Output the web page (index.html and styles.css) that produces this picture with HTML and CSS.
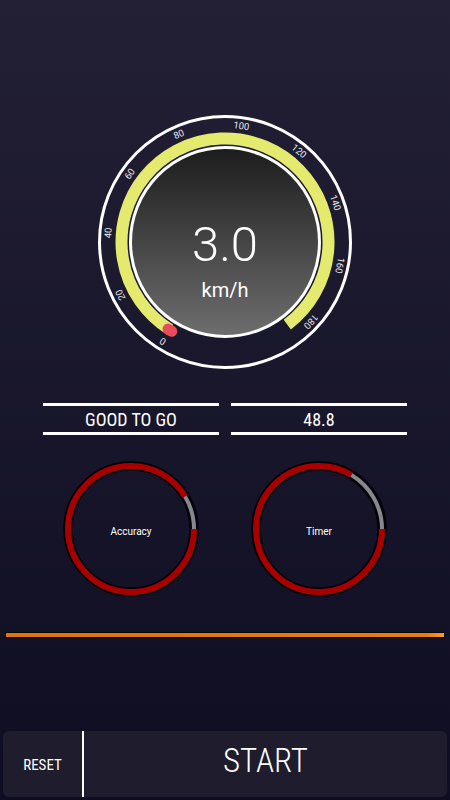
FILE: index.html
```html
<!DOCTYPE html>
<html lang="en">
<head>
    <meta charset="UTF-8">
    <title>Speedometer</title>
    <link rel="stylesheet" href="styles.css">
</head>
<body>
    <div class="screen">
        <!-- speed gauge -->
        <div class="gauge">
            <svg class="dial" width="260" height="260" viewBox="0 0 260 260">
                <defs>
                    <linearGradient id="faceFill" x1="0" y1="0" x2="0" y2="1">
                        <stop offset="0" stop-color="#1c1c1c"/>
                        <stop offset="1" stop-color="#6e6e6e"/>
                    </linearGradient>
                </defs>
                <circle cx="130" cy="130" r="125.5" fill="none" stroke="#fff" stroke-width="3"/>
                <g class="scale">
                    <text x="130" y="12.5" transform="rotate(212 130 130)">0</text>
                    <text x="130" y="12.5" transform="rotate(243.2 130 130)">20</text>
                    <text x="130" y="12.5" transform="rotate(274.4 130 130)">40</text>
                    <text x="130" y="12.5" transform="rotate(305.6 130 130)">60</text>
                    <text x="130" y="12.5" transform="rotate(336.8 130 130)">80</text>
                    <text x="130" y="12.5" transform="rotate(368 130 130)">100</text>
                    <text x="130" y="12.5" transform="rotate(399.2 130 130)">120</text>
                    <text x="130" y="12.5" transform="rotate(430.4 130 130)">140</text>
                    <text x="130" y="12.5" transform="rotate(461.6 130 130)">160</text>
                    <text x="130" y="12.5" transform="rotate(492.8 130 130)">180</text>
                </g>
                <path d="M 75.15 217.77 A 103.5 103.5 0 1 1 192.29 212.66" fill="none" stroke="#e4ea6e" stroke-width="12"/>
                <circle cx="130" cy="130" r="94.5" fill="url(#faceFill)" stroke="#fff" stroke-width="3"/>
                <!-- needle -->
                <path d="M 76.75 219.34 A 104 104 0 0 1 73.05 217.03" fill="none" stroke="#e94b5b" stroke-width="11" stroke-linecap="round"/>
            </svg>
            <div class="readout">
                <span class="speed">3.0</span>
                <span class="unit">km/h</span>
            </div>
        </div>

        <div class="status">
            <div class="status_box">GOOD TO GO</div>
            <div class="status_box">48.8</div>
        </div>

        <div class="meters">
            <div class="meter">
                <svg width="136" height="136" viewBox="0 0 136 136">
                    <circle class="meter_edge" cx="68" cy="68" r="63"/>
                    <circle class="meter_fill" cx="68" cy="68" r="63" pathLength="360" stroke-dasharray="329 31"/>
                    <circle class="meter_rest" cx="68" cy="68" r="63" pathLength="360" stroke-dasharray="31 329" stroke-dashoffset="31"/>
                </svg>
                <span class="meter_label">Accuracy</span>
            </div>
            <div class="meter">
                <svg width="136" height="136" viewBox="0 0 136 136">
                    <circle class="meter_edge" cx="68" cy="68" r="63"/>
                    <circle class="meter_fill" cx="68" cy="68" r="63" pathLength="360" stroke-dasharray="301 59"/>
                    <circle class="meter_rest" cx="68" cy="68" r="63" pathLength="360" stroke-dasharray="59 301" stroke-dashoffset="59"/>
                </svg>
                <span class="meter_label">Timer</span>
            </div>
        </div>

        <div class="progress"></div>

        <div class="controls">
            <a class="reset_btn">RESET</a>
            <a class="start_btn">START</a>
        </div>
    </div>
</body>
</html>
```

FILE: styles.css
```css
html{
    font-family: Roboto, "Liberation Sans", sans-serif;
}
body{margin: 0;padding: 0;}
.screen{
    display: flex;
    flex-direction: column;
    min-height: 100vh;
    background: linear-gradient(#232036, #0f0d22);
    color: #fff;
}

/* gauge */
.gauge{
    display: grid;
    justify-content: center;
    margin-top: 112px;
}
.gauge .dial,
.gauge .readout{
    grid-area: 1 / 1;
}
.gauge .dial{display: block;}
.gauge .scale text{
    fill: #e6e6e6;
    font-size: 9.5px;
    text-anchor: middle;
    dominant-baseline: central;
}
.gauge .readout{
    display: flex;
    flex-direction: column;
    align-items: center;
    padding-top: 108px;
}
.gauge .speed{
    font-size: 49px;
    font-weight: 300;
    line-height: 50px;
    font-stretch: 92%;
}
.gauge .unit{
    margin-top: 10px;
    font-size: 20px;
    line-height: 20px;
}

/* status */
.status,
.meters{
    display: grid;
    grid-template-columns: 176px 176px;
    column-gap: 12px;
    justify-content: center;
}
.status{
    margin-top: 31px;
}
.status_box{
    border-top: 3px solid #fff;
    border-bottom: 3px solid #fff;
    height: 26px;
    line-height: 27px;
    text-align: center;
    font-size: 18px;
    font-stretch: 80%;
}

/* meters */
.meters{
    margin-top: 26px;
}
.meter{
    display: grid;
    justify-self: center;
    place-items: center;
}
.meter svg,
.meter .meter_label{
    grid-area: 1 / 1;
}
.meter svg{display: block;}
.meter circle{fill: none;}
.meter .meter_edge{
    stroke: #030208;
    stroke-width: 9.5;
}
.meter .meter_fill{
    stroke: #a80000;
    stroke-width: 6;
}
.meter .meter_rest{
    stroke: #88878f;
    stroke-width: 4;
}
.meter .meter_label{
    font-size: 10px;
    padding-top: 5px;
}

.progress{
    margin: 36px 6px 0;
    height: 4px;
    background: linear-gradient(to right, #dc7606, #e3800c 96%, #ff9b22);
    box-shadow: 0 0 0 1px #05040c;
}

/* buttons */
.controls{
    display: flex;
    margin: auto 3px 3px;
    height: 66px;
    background: #1e1c2d;
    border-radius: 6px;
}
.controls a{
    display: flex;
    align-items: center;
    justify-content: center;
    cursor: pointer;
    font-stretch: 75%;
}
.reset_btn{
    width: 79px;
    border-right: 2px solid #fff;
    font-size: 15px;
    padding-top: 2px;
}
.start_btn{
    flex: 1;
    font-size: 33px;
    font-weight: 300;
    padding-bottom: 8px;
}
```
